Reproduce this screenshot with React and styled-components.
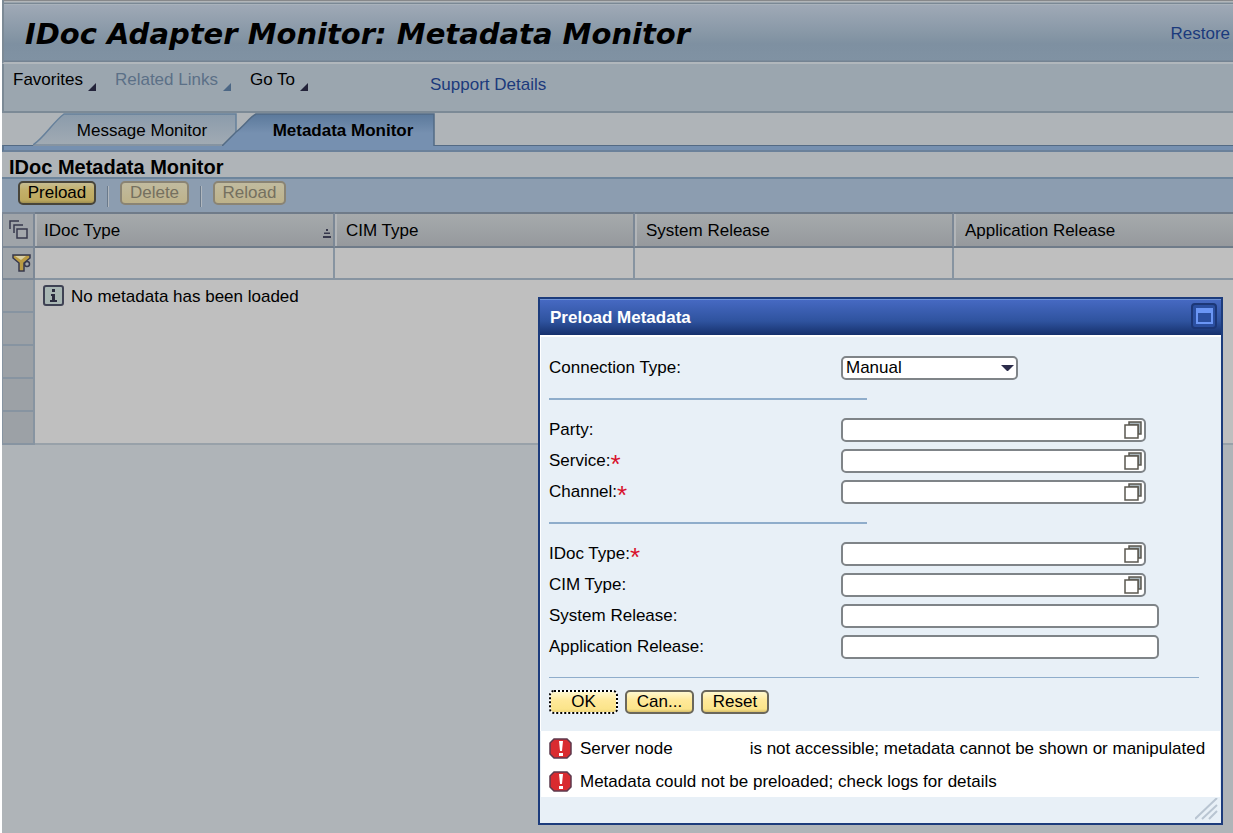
import React from "react";
import styled, { createGlobalStyle, css } from "styled-components";

const GlobalStyle = createGlobalStyle`
  * { box-sizing: border-box; }
  body {
    margin: 0;
    background: #fff;
    color: #000;
    font: 17px/20px "Liberation Sans", Arial, sans-serif;
  }
  button, input, select { font: inherit; color: inherit; }
`;

const Page = styled.div`
  position: relative;
  min-height: 100vh;
  margin-left: 2px;
  overflow: hidden;
  background: #afb4b8;
`;

const Header = styled.header`
  display: flex;
  align-items: center;
  justify-content: space-between;
  height: 64px;
  padding: 6px 3px 0 21px;
  border-left: 2px solid #7c8a96;
  border-bottom: 2px solid #b1b7bc;
  background:
    linear-gradient(#87888a 1px, #b2b6b9 1px 2px, #9aa4ad 2px 3px, #7a8894 3px 4px, #a9b2bb 4px 5px, transparent 5px),
    linear-gradient(#9fa9b6 5px, #8797a6 34px, #7e90a1 44px, #8092a3 60px, #748392 61px);
`;

const Title = styled.h1`
  margin: 0;
  font: italic bold 29px/36px "DejaVu Sans", Verdana, sans-serif;
  white-space: nowrap;
`;

const Link = styled.a`
  color: #1b3a7c;
  text-decoration: none;
  white-space: nowrap;
`;

const MenuBar = styled.nav`
  display: flex;
  align-items: flex-start;
  gap: 19px;
  height: 49px;
  padding: 6px 9px 0;
  border-left: 2px solid #7c8a96;
  border-bottom: 2px solid #7c8a96;
  background: #9ba6af;

  ${Link} { margin: 5px 0 0 103px; }
`;

const MenuButton = styled.button`
  display: flex;
  gap: 5px;
  padding: 0;
  border: 0;
  background: none;
  color: ${(p) => (p.disabled ? "#5b7087" : "#000")};
  white-space: nowrap;

  svg { margin-top: 13px; }
`;

const TabStrip = styled.div`
  display: flex;
  height: 32px;
  padding-left: 31px;
`;

const Tab = styled.button`
  position: relative;
  width: ${(p) => p.$width}px;
  height: 33px;
  margin-left: ${(p) => (p.$active ? -15 : 0)}px;
  padding: ${(p) => (p.$active ? "2px 0 0 28px" : "2px 0 0 14px")};
  border: 0;
  background: none;
  font-weight: ${(p) => (p.$active ? "bold" : "normal")};
  white-space: nowrap;

  svg { position: absolute; left: 0; top: 0; }
  span { position: relative; }
`;

const TabEdge = styled.div`
  height: 7px;
  border-top: 1px solid #536a84;
  border-bottom: 2px solid #6b819a;
  border-left: 2px solid #5e7690;
  background: #7690b0;
`;

const SectionTitle = styled.h2`
  margin: 0;
  padding: 5px 7px 0;
  font-size: 20px;
  line-height: 20px;
`;

const Toolbar = styled.div`
  display: flex;
  align-items: flex-start;
  gap: 11px;
  height: 35px;
  padding: 2px 16px 0;
  border-top: 2px solid #6d859c;
  background: #8c9db0;
`;

const Divider = styled.span`
  width: 2px;
  height: 21px;
  margin-top: 5px;
  border-left: 1px solid #6a7a8b;
  border-right: 1px solid #b0b7be;
`;

const Button = styled.button`
  width: ${(p) => p.$width}px;
  height: 24px;
  padding: 0 0 1px;
  border: 2px solid #6a675c;
  border-radius: 5px;
  line-height: 18px;
  white-space: nowrap;
  background: linear-gradient(#fff8cf, #ffe99a 40%, #fbe48a 85%, #d8c06c);

  ${(p) => p.$dimmed && css`
    border-color: #48453a;
    background: linear-gradient(#c6bd92, #c3b06a 35%, #bda95f 85%, #a08f50);
  `}
  ${(p) => p.disabled && css`
    border-color: #8a8474;
    color: #75705f;
    background: linear-gradient(#c1bb9f, #bdb28a);
  `}
  ${(p) => p.$focused && css`
    border: 2px dotted #000;
    background: linear-gradient(#fff8cf, #ffe99a 40%, #fbe48a 85%, #efd67d) padding-box, #fff;
  `}
`;

const Grid = styled.table`
  width: 100%;
  table-layout: fixed;
  border-collapse: separate;
  border-spacing: 0;
`;

const HeadCell = styled.th`
  height: 36px;
  padding: 0 9px 0 11px;
  border-top: 2px solid #6f7b89;
  border-bottom: 2px solid #6f7b89;
  border-right: 2px solid #7c8896;
  font-weight: normal;
  text-align: left;
  white-space: nowrap;
  background: linear-gradient(#a6aaac, #96999d);
  box-shadow: inset 2px 0 #b2b5b8;

  &:nth-child(2) { padding-left: 9px; }
  &:last-child { border-right: 0; }
  > div { display: flex; justify-content: space-between; align-items: center; padding-top: 1px; }
  svg { margin: 6px -8px 0 0; }
`;

const CornerCell = styled.th`
  padding: 0 0 0 6px;
  border: solid #7c8896;
  border-width: 2px 2px 2px 1px;
  background: #9fa4a9;
  text-align: left;
  svg { display: block; }
`;

const FilterCell = styled.td`
  height: 32px;
  padding: 0;
  border-right: 2px solid #8794a1;
  border-bottom: 2px solid #8794a1;
  background: #bfbfbf;

  &:last-child { border-right: 0; }
  input {
    display: block;
    width: 100%;
    height: 30px;
    padding: 0 9px;
    border: 0;
    background: none;
  }
`;

const FilterHead = styled(CornerCell)`
  padding: 0 0 0 9px;
  border-width: 0 2px 2px 1px;
`;

const RowHead = styled.th`
  height: 33px;
  padding: 0;
  border: solid #8794a1;
  border-width: 0 2px 2px 1px;
  background: #9ca1a6;
`;

const BodyCell = styled.td`
  padding: 4px 8px;
  vertical-align: top;
  background: #bfbfbf;
  border-bottom: 2px solid #98a1a9;
`;

const Notice = styled.div`
  display: flex;
  align-items: center;
  gap: 7px;

  span { padding-top: 3px; }
`;

const Dialog = styled.section`
  position: absolute;
  top: 297px;
  right: 10px;
  width: 685px;
  border: 2px solid #1d3c7c;
  background: #e8f0f7;
`;

const DialogHeader = styled.header`
  display: flex;
  align-items: center;
  justify-content: space-between;
  height: 36px;
  padding: 0 4px 0 10px;
  border-top: 1px solid #6f93d6;
  background: linear-gradient(#4669c2, #2f539f 60%, #16306c);

  h2 { margin: 1px 0 0; font-size: 17px; line-height: 20px; color: #fff; }
`;

const WindowButton = styled.button`
  width: 26px;
  height: 26px;
  margin-bottom: 4px;
  padding: 0;
  border: 2px solid #1c3777;
  border-radius: 4px;
  background: #2b4fa0;

  svg { display: block; margin: 0 auto; }
`;

const Form = styled.form`
  padding: 15px 0 17px 8px;
  border-top: 2px solid #fff;
  border-left: 1px solid #fff;
`;

const Row = styled.div`
  display: grid;
  grid-template-columns: 292px 1fr;
  align-items: center;
  height: 31px;

  label { display: flex; }
`;

const Required = styled.span`
  height: 20px;
  color: #d8102c;
  font-size: 26px;
  line-height: 26px;
`;

const Rule = styled.hr`
  width: ${(p) => (p.$full ? "auto" : "318px")};
  height: ${(p) => (p.$full ? 1 : 2)}px;
  margin: 15px ${(p) => (p.$full ? 22 : 0)}px ${(p) => (p.$full ? 12 : 14)}px 0;
  border: 0;
  background: #8fadcb;
`;

const box = css`
  height: 24px;
  border: 2px solid #7f8488;
  border-radius: 5px;
  background: #fff;
`;

const Field = styled.div`
  ${box}
  display: flex;
  align-items: center;
  width: ${(p) => (p.$help ? 305 : 318)}px;

  input {
    flex: 1;
    min-width: 0;
    height: 20px;
    padding: 0 4px;
    border: 0;
    outline: 0;
    background: none;
  }
  button { padding: 0 2px 0 0; border: 0; background: none; }
  svg { display: block; }
`;

const SelectBox = styled.div`
  position: relative;
  width: 177px;

  select {
    ${box}
    width: 100%;
    padding: 0 3px;
    line-height: 20px;
    appearance: none;
  }
  svg { position: absolute; right: 4px; top: 9px; pointer-events: none; }
`;

const Actions = styled.div`
  display: flex;
  gap: 7px;
`;

const Messages = styled.ul`
  margin: 0 1px;
  padding: 0;
  list-style: none;
  background: #fff;
`;

const Message = styled.li`
  display: flex;
  align-items: center;
  gap: 8px;
  height: 33px;
  padding: 2px 0 0 8px;
  white-space: nowrap;
`;

const MessageRest = styled.span`
  margin-left: 69px;
`;

const DialogFooter = styled.footer`
  display: flex;
  justify-content: flex-end;
  align-items: flex-end;
  height: 26px;
  padding: 0 3px 3px;
`;

const MenuCorner = ({ color }) => (
  <svg width="8" height="8" viewBox="0 0 8 8"><path d="M8 0V8H0Z" fill={color} /></svg>
);

const InactiveTabShape = () => (
  <svg width="204" height="33" viewBox="0 0 204 33">
    <defs>
      <linearGradient id="tabOff" x1="0" y1="0" x2="0" y2="1">
        <stop offset="0" stopColor="#8b9bab" />
        <stop offset="1" stopColor="#a2abb4" />
      </linearGradient>
    </defs>
    <path d="M0 32C12 24 20 9 31 1H203V33H0Z" fill="url(#tabOff)" />
    <path d="M0 32C12 24 20 9 31 1H203V20" fill="none" stroke="#66809b" strokeWidth="1.5" />
    <path d="M0 32H204" stroke="#6a7c8e" />
  </svg>
);

const ActiveTabShape = () => (
  <svg width="214" height="33" viewBox="0 0 214 33">
    <defs>
      <linearGradient id="tabOn" x1="0" y1="0" x2="0" y2="1">
        <stop offset="0" stopColor="#5b799b" />
        <stop offset="0.6" stopColor="#7690b0" />
      </linearGradient>
    </defs>
    <path d="M0 33L14 19C22 13 28 4 34 1H212V33Z" fill="url(#tabOn)" />
    <path d="M0 33L14 19C22 13 28 4 34 1H212V33" fill="none" stroke="#536b85" strokeWidth="1.5" />
  </svg>
);

const SelectAllIcon = () => (
  <svg width="20" height="20" viewBox="0 0 20 20" fill="none" stroke="#37384c" strokeWidth="1.5">
    <path d="M1 9V1H10M5 13V5H14" />
    <rect x="8" y="9" width="10" height="9" fill="#a4a8ac" />
  </svg>
);

const FilterIcon = () => (
  <svg width="19" height="18" viewBox="0 0 19 18">
    <circle cx="15" cy="10" r="2.5" fill="#a4a8ac" stroke="#37384c" strokeWidth="1.5" />
    <path d="M1 1H18V4L12 9V17H7V9L1 4Z" fill="#b99a42" stroke="#37384c" strokeWidth="1.5" />
    <path d="M3 2H14L9 6Z" fill="#d8cda0" />
  </svg>
);

const SortIcon = () => (
  <svg width="10" height="9" viewBox="0 0 10 9" fill="#37384c">
    <path d="M4 0H6V2H4ZM2 3.5H8V5H2ZM1 7H9V9H1Z" />
  </svg>
);

const InfoIcon = () => (
  <svg width="21" height="21" viewBox="0 0 21 21">
    <rect x="1" y="1" width="19" height="19" rx="2" fill="#a9b7b4" stroke="#3f4254" strokeWidth="2" />
    <path d="M9 4H12V7H9ZM8 9H12V15H14V17H7V15H9V11H8Z" fill="#2b2c3f" />
  </svg>
);

const ErrorIcon = () => (
  <svg width="23" height="21" viewBox="0 0 23 21">
    <path d="M5 1H18L22 5V16L18 20H5L1 16V5Z" fill="#d92b30" stroke="#5c3a4e" strokeWidth="1.5" />
    <path d="M10 3H14L13 13H11ZM10 15H14V18H10Z" fill="#fff" />
  </svg>
);

const HelpIcon = () => (
  <svg width="18" height="18" viewBox="0 0 18 18" stroke="#5b5850" strokeWidth="1.5">
    <path d="M5 1H17V13H14V4H5Z" fill="#a9b5ba" />
    <rect x="1" y="4" width="13" height="13" fill="#fff" />
  </svg>
);

const MaximizeIcon = () => (
  <svg width="17" height="16" viewBox="0 0 17 16">
    <rect x="1" y="1" width="15" height="14" fill="#2b4fa0" stroke="#6b96f5" strokeWidth="2" />
    <path d="M1 0H16V5H1Z" fill="#6b96f5" />
  </svg>
);

const GripIcon = () => (
  <svg width="23" height="22" viewBox="0 0 23 22" stroke="#b9c5d2" strokeWidth="2">
    <path d="M0 21L22 0M7 21L22 7M14 21L22 13" />
  </svg>
);

function FormField({ id, label, required, help }) {
  return (
    <Row>
      <label htmlFor={id}>
        {label}:{required && <Required>*</Required>}
      </label>
      <Field $help={help}>
        <input id={id} type="text" required={required} />
        {help && (
          <button type="button" aria-label={`Choose ${label}`}><HelpIcon /></button>
        )}
      </Field>
    </Row>
  );
}

const columns = ["IDoc Type", "CIM Type", "System Release", "Application Release"];

export default function App() {
  return (
    <>
      <GlobalStyle />
      <Page>
        <Header>
          <Title>IDoc Adapter Monitor: Metadata Monitor</Title>
          <Link href="#restore">Restore</Link>
        </Header>
        <MenuBar>
          <MenuButton type="button">Favorites<MenuCorner color="#23233a" /></MenuButton>
          <MenuButton type="button" disabled>Related Links<MenuCorner color="#4c6785" /></MenuButton>
          <MenuButton type="button">Go To<MenuCorner color="#23233a" /></MenuButton>
          <Link href="#support">Support Details</Link>
        </MenuBar>
        <TabStrip role="tablist">
          <Tab type="button" role="tab" $width={204}>
            <InactiveTabShape /><span>Message Monitor</span>
          </Tab>
          <Tab type="button" role="tab" aria-selected="true" $active $width={214}>
            <ActiveTabShape /><span>Metadata Monitor</span>
          </Tab>
        </TabStrip>
        <TabEdge />
        <SectionTitle>IDoc Metadata Monitor</SectionTitle>
        <Toolbar>
          <Button type="button" $dimmed $width={78}>Preload</Button>
          <Divider />
          <Button type="button" disabled $width={69}>Delete</Button>
          <Divider />
          <Button type="button" disabled $width={73}>Reload</Button>
        </Toolbar>
        <Grid>
          <colgroup>
            <col style={{ width: 33 }} />
            <col style={{ width: 300 }} />
            <col style={{ width: 300 }} />
            <col style={{ width: 319 }} />
            <col />
          </colgroup>
          <thead>
            <tr>
              <CornerCell aria-label="Select all"><SelectAllIcon /></CornerCell>
              {columns.map((name, i) => (
                <HeadCell key={name}>
                  <div>{name}{i === 0 && <SortIcon />}</div>
                </HeadCell>
              ))}
            </tr>
          </thead>
          <tbody>
            <tr>
              <FilterHead aria-label="Filter"><FilterIcon /></FilterHead>
              {columns.map((name) => (
                <FilterCell key={name}>
                  <input type="text" aria-label={`Filter ${name}`} />
                </FilterCell>
              ))}
            </tr>
            <tr>
              <RowHead />
              <BodyCell colSpan={4} rowSpan={5}>
                <Notice><InfoIcon /><span>No metadata has been loaded</span></Notice>
              </BodyCell>
            </tr>
            <tr><RowHead /></tr>
            <tr><RowHead /></tr>
            <tr><RowHead /></tr>
            <tr><RowHead /></tr>
          </tbody>
        </Grid>

        <Dialog role="dialog" aria-labelledby="dialog-title">
          <DialogHeader>
            <h2 id="dialog-title">Preload Metadata</h2>
            <WindowButton type="button" aria-label="Maximize"><MaximizeIcon /></WindowButton>
          </DialogHeader>
          <Form onSubmit={(e) => e.preventDefault()}>
            <Row>
              <label htmlFor="connection">Connection Type:</label>
              <SelectBox>
                <select id="connection"><option>Manual</option></select>
                <svg width="13" height="6" viewBox="0 0 13 6"><path d="M0 0H13L7 6H6Z" fill="#2b2c4a" /></svg>
              </SelectBox>
            </Row>
            <Rule />
            <FormField id="party" label="Party" help />
            <FormField id="service" label="Service" required help />
            <FormField id="channel" label="Channel" required help />
            <Rule />
            <FormField id="idoc" label="IDoc Type" required help />
            <FormField id="cim" label="CIM Type" help />
            <FormField id="system" label="System Release" />
            <FormField id="application" label="Application Release" />
            <Rule $full />
            <Actions>
              <Button type="submit" $focused $width={69}>OK</Button>
              <Button type="button" $width={69}>Can...</Button>
              <Button type="reset" $width={68}>Reset</Button>
            </Actions>
          </Form>
          <Messages>
            <Message>
              <ErrorIcon />
              <span>Server node</span>
              <MessageRest>is not accessible; metadata cannot be shown or manipulated</MessageRest>
            </Message>
            <Message>
              <ErrorIcon />
              <span>Metadata could not be preloaded; check logs for details</span>
            </Message>
          </Messages>
          <DialogFooter><GripIcon /></DialogFooter>
        </Dialog>
      </Page>
    </>
  );
}
